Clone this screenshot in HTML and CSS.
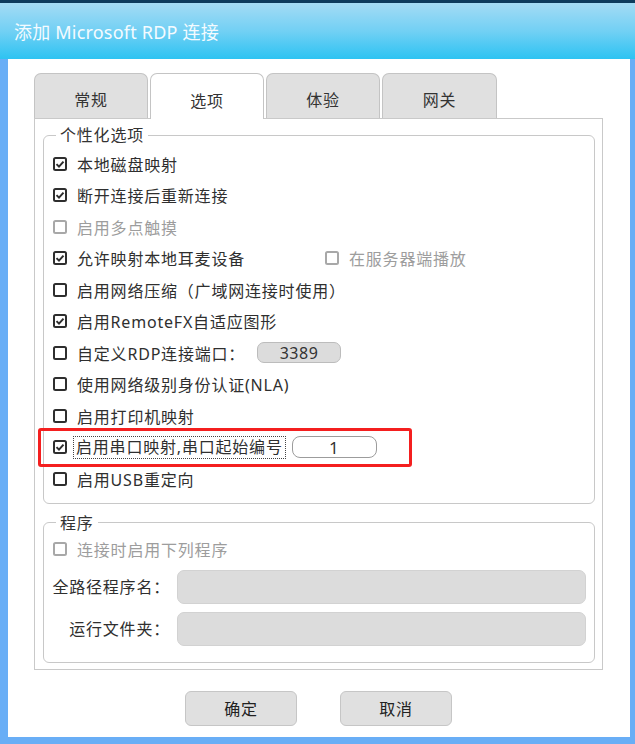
FILE: index.html
```html
<!DOCTYPE html>
<html lang="zh-CN">
<head>
<meta charset="utf-8">
<title>添加 Microsoft RDP 连接</title>
<link rel="stylesheet" href="styles.css">
</head>
<body>
<div class="screen">
  <div class="titlebar"><span class="title">添加 Microsoft RDP 连接</span></div>
  <div class="frame">
    <div class="window">
      <div class="tabs">
        <div class="tab">常规</div>
        <div class="tab active">选项</div>
        <div class="tab">体验</div>
        <div class="tab last">网关</div>
      </div>
      <div class="panel">
        <fieldset class="group g1">
          <legend>个性化选项</legend>
          <div class="row">
            <svg class="cb" viewBox="0 0 14 14"><rect x="1" y="1" width="12" height="12" rx="1.5" fill="#fff" stroke="#2e2e2e" stroke-width="2"/><path d="M3.5 7.1 L6 9.6 L10.5 4.6" fill="none" stroke="#2e2e2e" stroke-width="2"/></svg>
            <span>本地磁盘映射</span>
          </div>
          <div class="row">
            <svg class="cb" viewBox="0 0 14 14"><rect x="1" y="1" width="12" height="12" rx="1.5" fill="#fff" stroke="#2e2e2e" stroke-width="2"/><path d="M3.5 7.1 L6 9.6 L10.5 4.6" fill="none" stroke="#2e2e2e" stroke-width="2"/></svg>
            <span>断开连接后重新连接</span>
          </div>
          <div class="row disabled">
            <svg class="cb" viewBox="0 0 14 14"><rect x="1" y="1" width="12" height="12" rx="1.5" fill="#fff" stroke="#a8a8a8" stroke-width="2"/></svg>
            <span>启用多点触摸</span>
          </div>
          <div class="row">
            <div class="opt wide">
              <svg class="cb" viewBox="0 0 14 14"><rect x="1" y="1" width="12" height="12" rx="1.5" fill="#fff" stroke="#2e2e2e" stroke-width="2"/><path d="M3.5 7.1 L6 9.6 L10.5 4.6" fill="none" stroke="#2e2e2e" stroke-width="2"/></svg>
              <span>允许映射本地耳麦设备</span>
            </div>
            <div class="opt disabled">
              <svg class="cb" viewBox="0 0 14 14"><rect x="1" y="1" width="12" height="12" rx="1.5" fill="#fff" stroke="#a8a8a8" stroke-width="2"/></svg>
              <span>在服务器端播放</span>
            </div>
          </div>
          <div class="row">
            <svg class="cb" viewBox="0 0 14 14"><rect x="1" y="1" width="12" height="12" rx="1.5" fill="#fff" stroke="#2e2e2e" stroke-width="2"/></svg>
            <span>启用网络压缩（广域网连接时使用）</span>
          </div>
          <div class="row">
            <svg class="cb" viewBox="0 0 14 14"><rect x="1" y="1" width="12" height="12" rx="1.5" fill="#fff" stroke="#2e2e2e" stroke-width="2"/><path d="M3.5 7.1 L6 9.6 L10.5 4.6" fill="none" stroke="#2e2e2e" stroke-width="2"/></svg>
            <span>启用RemoteFX自适应图形</span>
          </div>
          <div class="row">
            <svg class="cb" viewBox="0 0 14 14"><rect x="1" y="1" width="12" height="12" rx="1.5" fill="#fff" stroke="#2e2e2e" stroke-width="2"/></svg>
            <span class="port-label">自定义RDP连接端口：</span>
            <span class="field grey">3389</span>
          </div>
          <div class="row">
            <svg class="cb" viewBox="0 0 14 14"><rect x="1" y="1" width="12" height="12" rx="1.5" fill="#fff" stroke="#2e2e2e" stroke-width="2"/></svg>
            <span>使用网络级别身份认证(NLA)</span>
          </div>
          <div class="row">
            <svg class="cb" viewBox="0 0 14 14"><rect x="1" y="1" width="12" height="12" rx="1.5" fill="#fff" stroke="#2e2e2e" stroke-width="2"/></svg>
            <span>启用打印机映射</span>
          </div>
          <div class="row hl">
            <svg class="cb" viewBox="0 0 14 14"><rect x="1" y="1" width="12" height="12" rx="1.5" fill="#fff" stroke="#2e2e2e" stroke-width="2"/><path d="M3.5 7.1 L6 9.6 L10.5 4.6" fill="none" stroke="#2e2e2e" stroke-width="2"/></svg>
            <span class="focus">启用串口映射,串口起始编号</span>
            <span class="field white">1</span>
            <div class="annot"></div>
          </div>
          <div class="row">
            <svg class="cb" viewBox="0 0 14 14"><rect x="1" y="1" width="12" height="12" rx="1.5" fill="#fff" stroke="#2e2e2e" stroke-width="2"/></svg>
            <span>启用USB重定向</span>
          </div>
        </fieldset>
        <fieldset class="group g2">
          <legend>程序</legend>
          <div class="row row2 disabled">
            <svg class="cb" viewBox="0 0 14 14"><rect x="1" y="1" width="12" height="12" rx="1.5" fill="#fff" stroke="#a8a8a8" stroke-width="2"/></svg>
            <span>连接时启用下列程序</span>
          </div>
          <div class="paths">
            <span class="plabel">全路径程序名：</span>
            <div class="pinput"></div>
            <span class="plabel">运行文件夹：</span>
            <div class="pinput"></div>
          </div>
        </fieldset>
      </div>
      <div class="buttons">
        <button class="btn">确定</button>
        <button class="btn">取消</button>
      </div>
    </div>
  </div>
</div>
</body>
</html>
```

FILE: styles.css
```css
* { box-sizing: border-box; }

html, body {
  margin: 0;
  padding: 0;
  overflow: hidden;
}

body {
  font-family: "Noto Sans", "Noto Sans CJK SC", sans-serif;
  color: #2f2f2f;
}

.screen {
  width: 635px;
  height: 744px;
  background: #69aef6;
  border-top: 3px solid #0d3b5c;
}

.titlebar {
  height: 56px;
  background: linear-gradient(#a4dbf4 0%, #72d0f4 50%, #2dc3f2 100%);
  display: flex;
  align-items: center;
  padding-left: 14px;
  padding-bottom: 1px;
}

.title {
  color: #f4fbff;
  font-size: 18px;
  letter-spacing: 0.2px;
}

.frame {
  padding: 0 5px 7px 8px;
}

.window {
  background: #fff;
  height: 678px;
  padding: 14px 27px 11px 26px;
}

.tabs {
  display: flex;
  align-items: flex-start;
  gap: 2px;
  height: 45px;
}

.tab {
  width: 114px;
  height: 45px;
  background: #e0e0e0;
  border: 1px solid #c4c4c4;
  border-bottom: 0;
  border-radius: 7px 7px 0 0;
  display: flex;
  align-items: center;
  justify-content: center;
  padding-top: 6px;
  font-size: 16px;
  letter-spacing: 0.8px;
  color: #333;
}

.tab.last { width: 115px; }

.tab.active {
  background: #fff;
  height: 46px;
  position: relative;
  z-index: 1;
}

.panel {
  width: 569px;
  border: 1px solid #c9c9c9;
  padding: 5px 7px 6px 8px;
}

.group {
  margin: 0;
  min-width: 0;
  border: 1px solid #c8c8c8;
  border-radius: 6px;
  padding: 2px 8px 8px 9px;
}

.group legend {
  font-size: 16px;
  letter-spacing: 0.8px;
  line-height: 22px;
  padding: 0 4px;
  margin-left: 3px;
  color: #333;
}

.g2 {
  margin-top: 8px;
  padding: 0 8px 16px 7px;
}

.g2 legend { margin-left: 5px; }

.row {
  height: 31.5px;
  display: flex;
  align-items: center;
  font-size: 16px;
  letter-spacing: 0.8px;
  color: #2f2f2f;
  white-space: nowrap;
}

.row2 { height: 31px; padding-left: 2px; }

.opt {
  display: flex;
  align-items: center;
}

.opt.wide { width: 272px; }

.disabled { color: #9d9d9d; }

.cb {
  width: 14px;
  height: 14px;
  flex: none;
  margin-right: 10px;
}

.port-label {
  width: 180px;
}

.field {
  display: inline-flex;
  align-items: center;
  justify-content: center;
  font-size: 17px;
  letter-spacing: 0.5px;
  color: #333;
}

.field.grey {
  width: 84px;
  height: 21px;
  background: #dcdcdc;
  border: 1px solid #bcbcbc;
  border-radius: 7px;
  font-size: 16px;
}

.field.white {
  width: 85px;
  height: 22px;
  margin-left: 6px;
  background: #fff;
  border: 1px solid #9c9c9c;
  border-radius: 8px;
}

.hl { position: relative; }

.focus {
  border: 1px dotted #444;
  padding: 0 2px 0 2px;
  margin-left: -4px;
  line-height: 21px;
}

.annot {
  position: absolute;
  left: -15px;
  top: -4px;
  width: 374px;
  height: 39px;
  border: 3px solid #f41f1f;
  border-radius: 3px;
}

.paths {
  display: grid;
  grid-template-columns: 119px 1fr;
  column-gap: 7px;
  row-gap: 8px;
  margin-top: 5px;
}

.plabel {
  font-size: 16px;
  letter-spacing: 0.8px;
  line-height: 34px;
  text-align: right;
  white-space: nowrap;
  color: #2f2f2f;
}

.pinput {
  height: 34px;
  background: #dcdcdc;
  border: 1px solid #d2d2d2;
  border-radius: 7px;
}

.buttons {
  margin-top: 21px;
  display: flex;
  justify-content: center;
  gap: 43px;
}

.btn {
  width: 112px;
  height: 35px;
  background: #e0e0e0;
  border: 1px solid #c6c6c6;
  border-radius: 6px;
  font-family: "Noto Sans", "Noto Sans CJK SC", sans-serif;
  font-size: 16px;
  letter-spacing: 0.8px;
  color: #222;
  padding: 0;
}
```
